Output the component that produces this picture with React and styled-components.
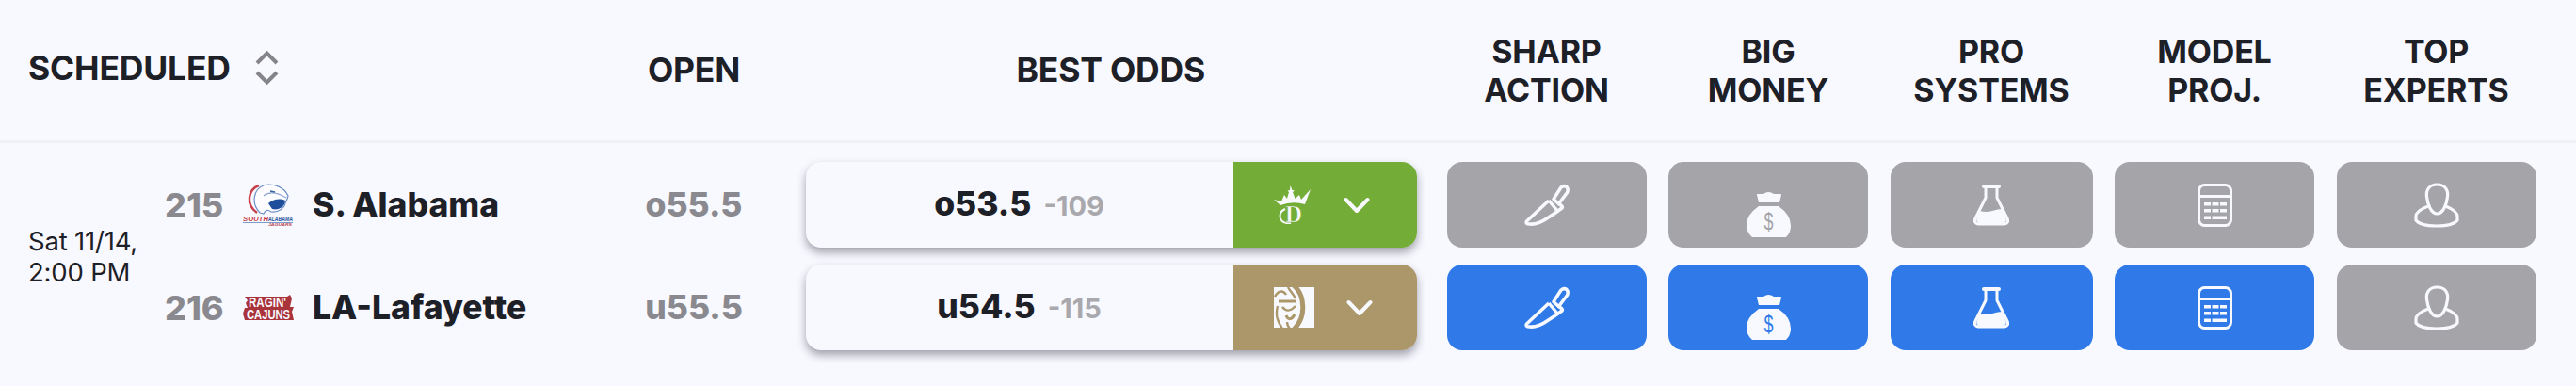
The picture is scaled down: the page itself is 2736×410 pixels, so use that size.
import React from "react";
import styled, { createGlobalStyle } from "styled-components";

const GlobalStyle = createGlobalStyle`
  body {
    margin: 0;
    background: #f8f9fe;
    font-family: "Inter", "Liberation Sans", sans-serif;
    color: #1e2027;
  }
`;

const GRAY = "#a5a4a9";
const BLUE = "#2f7ae8";

const columns = `
  display: grid;
  grid-template-columns: 588.5px 190px 657.5px 212px 212px 215px 212px 212px;
  column-gap: 23.5px;
  padding-left: 30px;
`;

const Page = styled.div`
  width: 2736px;
  height: 410px;
  overflow: hidden;
`;

const Header = styled.div`
  ${columns}
  height: 149px;
  align-items: center;
  border-bottom: 3px solid #f0f1f6;
`;

const HeadCell = styled.div`
  font-size: 34px;
  line-height: 41px;
  font-weight: 700;
  letter-spacing: -0.2px;
  text-align: center;
  white-space: pre-line;
`;

const WideHead = styled(HeadCell)`
  font-size: 35.5px;
`;

const SortCell = styled(WideHead)`
  display: flex;
  align-items: center;
  gap: 26px;
  margin-bottom: 5px;
`;

const OddsHead = styled(WideHead)`
  padding-right: 9px;
`;

const Body = styled.div`
  ${columns}
  grid-template-rows: 91px 91px;
  row-gap: 18px;
  padding-top: 20px;
`;

const GameCell = styled.div`
  grid-row: span 2;
  display: flex;
  align-items: center;
`;

const DateText = styled.div`
  width: 145px;
  padding-top: 2px;
  font-size: 27.5px;
  line-height: 33px;
  letter-spacing: -0.2px;
  flex: none;
`;

const Teams = styled.div`
  display: grid;
  grid-template-rows: 91px 91px;
  row-gap: 18px;
`;

const Team = styled.div`
  display: flex;
  align-items: center;
`;

const RotNumber = styled.span`
  width: 83px;
  font-size: 36px;
  font-weight: 800;
  color: #8a898f;
`;

const LogoBox = styled.span`
  width: 54px;
  margin-right: 20px;
  display: flex;
  justify-content: center;
`;

const TeamName = styled.span`
  font-size: 35.5px;
  font-weight: 800;
  white-space: nowrap;
`;

const OpenCell = styled.div`
  display: flex;
  align-items: center;
  justify-content: center;
  font-size: 35.5px;
  font-weight: 800;
  color: #8a898f;
`;

const OddsCard = styled.div`
  width: 649px;
  height: 91px;
  display: flex;
  border-radius: 16px;
  overflow: hidden;
  background: #f8f9fe;
  box-shadow: 0 5px 10px rgba(50, 50, 70, 0.45);
`;

const OddsValue = styled.div`
  flex: 1;
  display: flex;
  align-items: baseline;
  justify-content: center;
  gap: 13px;
  padding-top: 23px;
  font-size: 35.5px;
  font-weight: 800;
`;

const Juice = styled.span`
  font-size: 29px;
  font-weight: 700;
  color: #a9a8ad;
`;

const BookTab = styled.div`
  width: 195px;
  display: flex;
  align-items: center;
  padding-left: 43px;
  box-sizing: border-box;
  gap: 34px;
  color: #f8f9fe;
  background: ${(p) => p.$color};
`;

const SignalButton = styled.div`
  height: 91px;
  display: flex;
  align-items: center;
  justify-content: center;
  border-radius: 16px;
  color: #f8f9fe;
  background: ${(p) => (p.$on ? BLUE : GRAY)};
`;

const BagSvg = styled.svg`
  margin-top: 20px;
`;

const SortIcon = () => (
  <svg width="25" height="36" viewBox="0 0 25 36" fill="none" stroke="#858589" strokeWidth="4">
    <path d="M2 13 L12.5 2.5 L23 13" />
    <path d="M2 23 L12.5 33.5 L23 23" />
  </svg>
);

const Chevron = () => (
  <svg width="28" height="18" viewBox="0 0 28 18" fill="none" stroke="currentColor" strokeWidth="4" strokeLinecap="round" strokeLinejoin="round">
    <path d="M2.5 3 L14 15 L25.5 3" />
  </svg>
);

const KnifeIcon = () => (
  <svg width="48" height="45" viewBox="0 0 48 45" fill="none" stroke="currentColor" strokeWidth="3.5" strokeLinejoin="round">
    <path d="M31 16.5 L39 4 Q42 1.5 45 3.5 Q47 6 45.5 9.5 L36.5 21.5 Z" />
    <path d="M26 18 L2.5 40 Q1 43 5.5 43 Q14 44 24 37 Q32 32 40 26 Q41 25 39.5 23.5 L36.5 21.5 M26 18 L36 30" />
  </svg>
);

const BagIcon = ({ hole }) => (
  <BagSvg width="47" height="49" viewBox="0 0 47 49" fill="currentColor">
    <path d="M11 3 H18 Q23 -1 29 3 H36 Q37 3 37 4 L35 12 H13 L11 4 Q11 3 11 3 Z" />
    <path d="M13 16 H34 Q47 25 47 37 Q47 44 42 49 H6 Q0 44 0 36 Q0 25 13 16 Z" />
    <text x="18.5" y="41" fontSize="25" fontFamily="Liberation Sans, sans-serif" textLength="10" lengthAdjust="spacingAndGlyphs" fill={hole}>$</text>
  </BagSvg>
);

const FlaskIcon = () => (
  <svg width="38" height="44" viewBox="0 0 38 44" fill="none" stroke="currentColor" strokeWidth="3" strokeLinejoin="round">
    <path d="M11 2 H27" strokeWidth="4" strokeLinecap="round" />
    <path d="M13 3 V14 L2 36 Q0 41 5 42 H33 Q38 41 36 36 L25 14 V3" />
    <path d="M6.5 28 Q14 30 20 28 Q26 26 31 26 L35 38 L33 41 H5 L3 38 Z" fill="currentColor" stroke="none" />
  </svg>
);

const CalcIcon = () => (
  <svg width="37" height="46" viewBox="0 0 37 46" fill="none">
    <rect x="1.5" y="1.5" width="34" height="43" rx="6" stroke="currentColor" strokeWidth="3" />
    <path d="M2 13.5 H35" stroke="currentColor" strokeWidth="3" />
    <g fill="currentColor">
      <rect x="7" y="20" width="7" height="3.5" />
      <rect x="15.5" y="20" width="7" height="3.5" />
      <rect x="24" y="20" width="7" height="3.5" />
      <rect x="7" y="27" width="7" height="3.5" />
      <rect x="15.5" y="27" width="7" height="3.5" />
      <rect x="24" y="27" width="7" height="3.5" />
      <rect x="7" y="34.5" width="7" height="3.5" />
      <rect x="15.5" y="34.5" width="15.5" height="3.5" />
    </g>
  </svg>
);

const PersonIcon = () => (
  <svg width="48" height="48" viewBox="0 0 48 48" fill="none" stroke="currentColor" strokeWidth="3.2" strokeLinejoin="round">
    <path d="M24.5 2 C16 2 12.5 8 13.5 15 C14.5 23 18 33 24.5 33 C31 33 34.5 23 35.5 15 C36.5 8 33 2 24.5 2 Z" />
    <path d="M15 25 C7 28 2 31 2 36 V40 C5 44 14 46 24 46 C34 46 43 44 46 40 V36 C46 31 41 28 33.5 25" />
  </svg>
);

const JaguarLogo = () => (
  <svg width="54" height="45" viewBox="0 0 54 45">
    <path d="M17 2 C6 6 2 22 15 31" fill="none" stroke="#c8404a" strokeWidth="2.4" />
    <path d="M18 31 C9 22 10 6 23 1.5 C33 -0.5 44 4 48 13 C47 17 46 19 45 21 C44 26 38 31 30 30 C26 27 24 28 22 32 Z" fill="#fdfdff" stroke="#6d8fc8" strokeWidth="1.2" />
    <path d="M27 21 C31 17 39 15 45 18 C45 24 38 29 31 27 Z" fill="#1f4f9c" />
    <path d="M22 13 C28 8 36 9 46 15" fill="none" stroke="#8ea6d2" strokeWidth="1.2" />
    <path d="M29 8 L34 9" fill="none" stroke="#3a5f9f" strokeWidth="1.5" />
    <rect x="0" y="41" width="53" height="1" fill="#7c9bd0" />
    <text x="0" y="40" fontSize="8" fontWeight="700" fontStyle="italic" fontFamily="Liberation Sans, sans-serif" textLength="27" lengthAdjust="spacingAndGlyphs" fill="#c8404a">SOUTH</text>
    <text x="27" y="40" fontSize="8" fontWeight="700" fontStyle="italic" fontFamily="Liberation Sans, sans-serif" textLength="26" lengthAdjust="spacingAndGlyphs" fill="#2f5a9e">ALABAMA</text>
    <text x="27" y="45" fontSize="4" fontWeight="700" fontStyle="italic" fontFamily="Liberation Sans, sans-serif" textLength="25" lengthAdjust="spacingAndGlyphs" fill="#b8454e">JAGUARS</text>
  </svg>
);

const CajunsLogo = () => (
  <svg width="54" height="28" viewBox="0 0 54 28">
    <path d="M2 2 H47 L50 0 L52 4 L50 13 H54 L52 18 L54 27 H2 L0 20 L2 14 H5 L3 9 L5 6 Z" fill="#a9343c" />
    <text x="26" y="12.5" textAnchor="middle" fontSize="14" fontWeight="700" fontFamily="Liberation Sans, sans-serif" textLength="40" lengthAdjust="spacingAndGlyphs" fill="#f8f9fe">RAGIN'</text>
    <text x="27" y="25.5" textAnchor="middle" fontSize="14" fontWeight="700" fontFamily="Liberation Sans, sans-serif" textLength="46" lengthAdjust="spacingAndGlyphs" fill="#f8f9fe">CAJUNS</text>
  </svg>
);

const DraftKingsLogo = ({ hole }) => (
  <svg width="40" height="41" viewBox="0 0 40 41" fill="currentColor">
    <path d="M0 15 L8 17 L11 10 L14 14 L16 7 L14.5 5.5 L17 5 L17.5 0 L19.5 5 L22 5.5 L20 7 L22.5 14 L27 10 L29 15 L39 4 L33 20 Q20 16 7 21 Z" />
    <path d="M12 25 Q5 28 7 35 Q9 41 18 40" fill="none" stroke="currentColor" strokeWidth="2" />
    <text x="21" y="39" textAnchor="middle" fontSize="25" fontWeight="700" fontFamily="Liberation Serif, serif" stroke={hole} strokeWidth="0.6">D</text>
  </svg>
);

const MgmLogo = ({ hole }) => (
  <svg width="43" height="43" viewBox="0 0 43 43">
    <rect width="43" height="43" fill="currentColor" />
    <g fill="none" stroke={hole} strokeWidth="2.4">
      <path d="M21 -2 C33 8 35 32 21 45" strokeWidth="5" />
      <path d="M1 10 C5 3 10 3 13 8" />
      <path d="M15 0 C17 4 20 6 23 12" />
      <path d="M5 15 H24" strokeWidth="3" />
      <path d="M9 21 C13 26 17 26 23 20" />
      <path d="M13 30 C15 35 19 35 22 29" strokeWidth="3" />
      <path d="M4 20 C1 31 5 38 9 44" />
      <path d="M14 37 C14 40 15 42 17 44" />
    </g>
  </svg>
);

const rows = [
  {
    open: "o55.5",
    line: "o53.5",
    juice: "-109",
    book: "#73ad37",
    Book: DraftKingsLogo,
    signals: [false, false, false, false, false],
  },
  {
    open: "u55.5",
    line: "u54.5",
    juice: "-115",
    book: "#ab976a",
    Book: MgmLogo,
    signals: [true, true, true, true, false],
  },
];

const signalIcons = [KnifeIcon, BagIcon, FlaskIcon, CalcIcon, PersonIcon];

const App = () => {
  return (
    <Page>
      <GlobalStyle />
      <Header>
        <SortCell>
          SCHEDULED
          <SortIcon />
        </SortCell>
        <WideHead>OPEN</WideHead>
        <OddsHead>BEST ODDS</OddsHead>
        <HeadCell>{"SHARP\nACTION"}</HeadCell>
        <HeadCell>{"BIG\nMONEY"}</HeadCell>
        <HeadCell>{"PRO\nSYSTEMS"}</HeadCell>
        <HeadCell>{"MODEL\nPROJ."}</HeadCell>
        <HeadCell>{"TOP\nEXPERTS"}</HeadCell>
      </Header>
      <Body>
        <GameCell>
          <DateText>
            Sat 11/14,
            <br />
            2:00 PM
          </DateText>
          <Teams>
            <Team>
              <RotNumber>215</RotNumber>
              <LogoBox>
                <JaguarLogo />
              </LogoBox>
              <TeamName>S. Alabama</TeamName>
            </Team>
            <Team>
              <RotNumber>216</RotNumber>
              <LogoBox>
                <CajunsLogo />
              </LogoBox>
              <TeamName>LA-Lafayette</TeamName>
            </Team>
          </Teams>
        </GameCell>
        {rows.map((row) => (
          <React.Fragment key={row.line}>
            <OpenCell>{row.open}</OpenCell>
            <OddsCard>
              <OddsValue>
                {row.line}
                <Juice>{row.juice}</Juice>
              </OddsValue>
              <BookTab $color={row.book}>
                <row.Book hole={row.book} />
                <Chevron />
              </BookTab>
            </OddsCard>
            {row.signals.map((on, i) => {
              const Icon = signalIcons[i];
              return (
                <SignalButton key={i} $on={on}>
                  <Icon hole={on ? BLUE : GRAY} />
                </SignalButton>
              );
            })}
          </React.Fragment>
        ))}
      </Body>
    </Page>
  );
};

export default App;
